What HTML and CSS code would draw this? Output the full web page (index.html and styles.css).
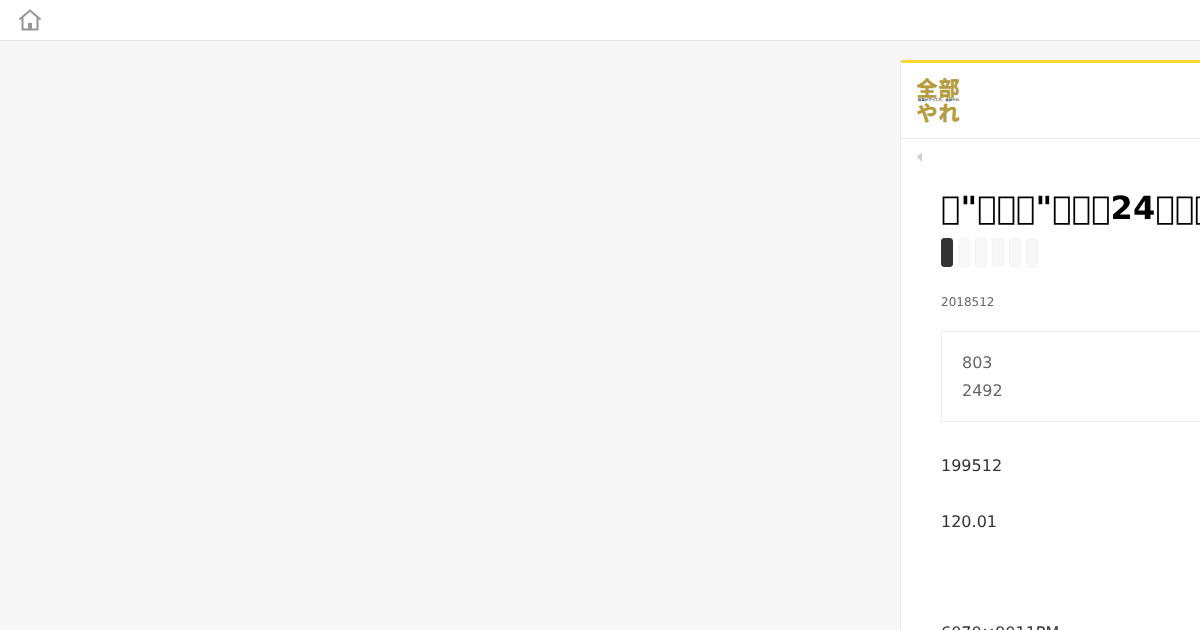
FILE: index.html
```html
<!DOCTYPE html>
<html lang="zh">
<head>
<meta charset="utf-8">
<title>全部やれ</title>
<link rel="stylesheet" href="styles.css">
</head>
<body>
<header class="topbar">
  <svg class="home" width="24" height="24" viewBox="0 0 24 24" fill="none" stroke="#959595" stroke-width="2">
    <path d="M1.5 11.5 12 2.5l10.5 9"/>
    <path d="M4.5 9.5v12h15v-12"/>
    <rect x="10" y="15" width="4" height="6.5" fill="#959595" stroke="none"/>
  </svg>
</header>
<div class="stage">
  <main class="panel">
    <div class="panel-inner">
      <div class="brand">
        <div class="logo">
          <span class="logo-top">全部</span>
          <span class="logo-mid">結果がすべてだ、全部やれ</span>
          <span class="logo-bot">やれ</span>
        </div>
      </div>
      <div class="crumbs"><span class="caret"></span></div>
      <article class="article">
        <h1 class="title">&#xE000;"&#xE000;&#xE000;&#xE000;"&#xE000;&#xE000;&#xE000;24&#xE000;&#xE000;&#xE000;&#xE000;&#xE000;</h1>
        <div class="tags">
          <span class="tag tag-active"></span>
          <span class="tag"></span>
          <span class="tag"></span>
          <span class="tag"></span>
          <span class="tag"></span>
          <span class="tag"></span>
        </div>
        <p class="date">2018512</p>
        <blockquote class="summary">
          <p>803</p>
          <p>2492</p>
        </blockquote>
        <p class="para">199512</p>
        <p class="para">120.01</p>
        <p class="para para-far">6070×9011PM</p>
      </article>
    </div>
  </main>
</div>
</body>
</html>
```
FILE: styles.css
```css
* { box-sizing: border-box; }
html, body { margin: 0; height: 630px; overflow: hidden; }
body { background: #f7f7f7; font-family: "DejaVu Sans", sans-serif; text-rendering: geometricPrecision; }
.topbar { height: 41px; background: #fff; border-bottom: 1px solid #e4e4e4; padding: 8px 18px; display: flex; align-items: flex-start; }
.stage { display: flex; justify-content: flex-end; padding-top: 19px; }
.panel { width: 300px; height: 570px; overflow: hidden; background: #fff; border-left: 1px solid #ececec; }
.panel-inner { border-top: 3px solid #fdd835; }
.brand { height: 76px; padding: 15px 15px; border-bottom: 1px solid #e8e8e8; }
.logo { width: 45px; height: 46px; display: flex; flex-direction: column; align-items: center; color: #b49c3e; font-family: "Noto Sans CJK JP", sans-serif; font-weight: 700; -webkit-text-stroke: 0.5px #b49c3e; }
.logo-top { font-size: 21px; height: 20px; line-height: 20px; letter-spacing: 1px; white-space: nowrap; }
.logo-mid { font-size: 3.5px; height: 5px; line-height: 5px; color: #443; white-space: nowrap; -webkit-text-stroke: 0; }
.logo-bot { font-size: 21px; height: 21px; line-height: 21px; letter-spacing: 1px; white-space: nowrap; }
.crumbs { height: 38px; padding: 13px 16px; }
.caret { display: block; width: 0; height: 0; border: 5px solid transparent; border-left-width: 0; border-right: 5px solid #cfcfcf; }
.article { width: 600px; padding: 0 40px; will-change: transform; }
.title { margin: 11px 0 0; font-size: 32px; line-height: 40px; font-weight: 700; letter-spacing: 0.2px; color: #000; white-space: nowrap; }
.tags { display: flex; gap: 5px; margin-top: 10px; }
.tag { width: 12px; height: 29px; border-radius: 3px; background: #f8f8f8; border: 1px solid #f3f3f3; }
.tag-active { background: #333; border-color: #333; }
.date { margin: 27px 0 0; font-size: 12px; line-height: 16px; color: #666; }
.summary { margin: 21px 0 0; padding: 17px 20px 15px; height: 91px; border: 1px solid #ececec; color: #666; font-size: 16px; line-height: 28px; }
.summary p { margin: 0; }
.para { margin: 30px 0 0; font-size: 16px; line-height: 26px; color: #333; white-space: nowrap; }
.summary + .para { margin-top: 31px; }
.para-far { margin-top: 85px; }
```
